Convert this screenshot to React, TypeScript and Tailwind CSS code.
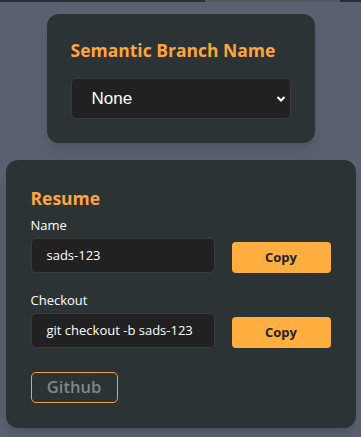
import { useState } from "react";

const font = { fontFamily: '"Open Sans", "Noto Sans", sans-serif' };

function CopyRow({ label, value }: { label: string; value: string }) {
  return (
    <div className="flex flex-col">
      <span className="text-[13px] leading-[18px] text-white">{label}</span>
      <div className="mt-1 flex items-end gap-[17px]">
        <div className="flex h-[35px] w-[184px] items-center rounded-[5px] border border-[#3b3b3b] bg-[#212121] pl-[15px] text-[13px] text-white">
          {value}
        </div>
        <button className="h-[31px] w-[99px] rounded-[4px] bg-[#ffae3f] text-[13px] font-bold text-[#222]">
          Copy
        </button>
      </div>
    </div>
  );
}

export default function App() {
  const [branch, setBranch] = useState("none");

  return (
    <div className="flex h-[437px] w-full flex-col bg-[#596170]" style={font}>
      <div className="flex h-[2px] w-full bg-[#2b2d33]">
        <div className="ml-[205px] w-[135px] bg-[#55585f]" />
      </div>

      <div className="mt-3 flex justify-center">
        <div className="flex w-[268px] flex-col rounded-[12px] bg-[#2c3335] px-6 pt-[25px] pb-[24px] shadow-lg">
          <h1 className="text-[17.5px] font-bold leading-[23px] text-[#ffa53a]">
            Semantic Branch Name
          </h1>
          <div className="relative mt-[16px]">
            <select
              value={branch}
              onChange={(e) => setBranch(e.target.value)}
              className="h-[41px] w-full appearance-none rounded-[5px] border border-[#3b3b3b] bg-[#212121] pl-5 text-[17px] text-white outline-none"
              style={{ fontFamily: '"Liberation Sans", Arial, sans-serif' }}
            >
              <option value="none">None</option>
              <option value="feat">feat</option>
              <option value="fix">fix</option>
            </select>
            <svg
              className="pointer-events-none absolute right-[5px] top-[17px]"
              width="10"
              height="8"
              viewBox="0 0 10 8"
            >
              <path d="M1.5 2 L5 5.5 L8.5 2" stroke="#fff" strokeWidth="2" fill="none" />
            </svg>
          </div>
        </div>
      </div>

      <div className="mt-[17px] flex justify-center">
        <div className="flex w-[350px] flex-col rounded-[12px] bg-[#2c3335] px-[25px] pt-[26px] pb-[25px] shadow-lg">
          <h2 className="text-[17.5px] font-bold leading-[24px] text-[#ffa53a]">Resume</h2>
          <div className="mt-[6px] flex flex-col gap-[18px]">
            <CopyRow label="Name" value="sads-123" />
            <CopyRow label="Checkout" value="git checkout -b sads-123" />
          </div>
          <button className="mt-[24px] h-[31px] w-[87px] rounded-[5px] border border-[#f0a640] text-[16.5px] font-semibold text-[#838789]">
            Github
          </button>
        </div>
      </div>
    </div>
  );
}
